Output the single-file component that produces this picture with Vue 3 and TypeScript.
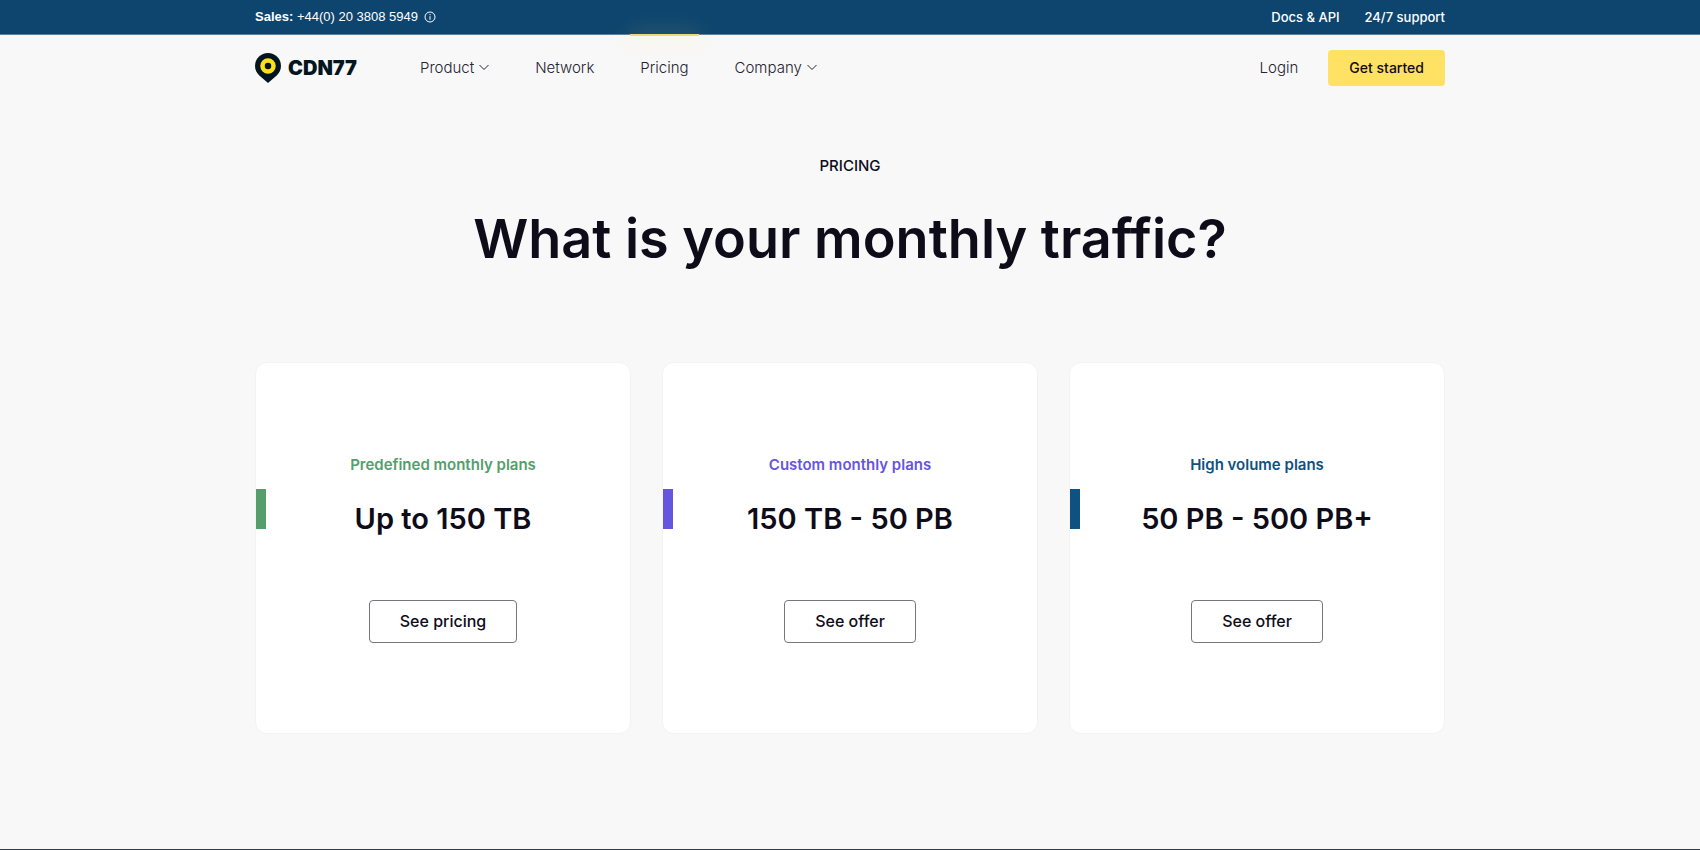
<script setup lang="ts">
interface NavItem {
  label: string
  menu: boolean
  active: boolean
}

interface Plan {
  id: string
  title: string
  range: string
  action: string
}

const navItems: NavItem[] = [
  { label: 'Product', menu: true, active: false },
  { label: 'Network', menu: false, active: false },
  { label: 'Pricing', menu: false, active: true },
  { label: 'Company', menu: true, active: false },
]

const plans: Plan[] = [
  { id: 'predefined', title: 'Predefined monthly plans', range: 'Up to 150 TB', action: 'See pricing' },
  { id: 'custom', title: 'Custom monthly plans', range: '150 TB - 50 PB', action: 'See offer' },
  { id: 'volume', title: 'High volume plans', range: '50 PB - 500 PB+', action: 'See offer' },
]
</script>

<template>
  <div class="page">
    <div class="topbar">
      <div class="container topbar-inner">
        <p class="sales">
          <span><strong>Sales:</strong> +44(0) 20 3808 5949</span>
          <svg class="info" viewBox="0 0 12 12" aria-hidden="true">
            <circle cx="6" cy="6" r="5" fill="none" stroke="currentColor" />
            <path d="M6 5.2v3.6M6 3v1.2" stroke="currentColor" />
          </svg>
        </p>
        <div class="topbar-links">
          <a href="#docs">Docs &amp; API</a>
          <a href="#support">24/7 support</a>
        </div>
      </div>
    </div>

    <header class="container header">
      <a class="logo" href="#home">
        <svg class="pin" viewBox="0 0 26 30" aria-hidden="true">
          <path d="M13 0A13 13 0 0 0 0 13c0 4.300 2 7.200 4.600 9.800L13 30l8.400-7.200C24 20.200 26 17.300 26 13A13 13 0 0 0 13 0Z" fill="#03151e" />
          <circle cx="13" cy="13" r="5.500" fill="none" stroke="#ffdf1b" stroke-width="4.500" />
        </svg>
        <span>CDN77</span>
      </a>
      <nav class="nav">
        <a
          v-for="item in navItems"
          :key="item.label"
          class="nav-link"
          :class="{ active: item.active }"
          :href="'#' + item.label.toLowerCase()"
        >
          {{ item.label }}
          <svg v-if="item.menu" class="chevron" viewBox="0 0 10 7" aria-hidden="true">
            <path d="M.5 1 5 5.500 9.500 1" fill="none" stroke="currentColor" />
          </svg>
        </a>
      </nav>
      <div class="account">
        <a class="login" href="#login">Login</a>
        <a class="start" href="#signup">Get started</a>
      </div>
    </header>

    <main class="container main">
      <p class="eyebrow">PRICING</p>
      <h1>What is your monthly traffic?</h1>
      <section class="plans">
        <article v-for="plan in plans" :key="plan.id" class="plan" :class="plan.id">
          <h2>{{ plan.title }}</h2>
          <p class="range">{{ plan.range }}</p>
          <button type="button">{{ plan.action }}</button>
        </article>
      </section>
    </main>

    <footer class="footer"></footer>
  </div>
</template>

<style>
body {
  margin: 0;
  background: #f8f8f8;
}
</style>

<style scoped>
.page {
  display: flex;
  flex-direction: column;
  min-height: 100vh;
  background: #f8f8f8;
  color: #0e0c19;
  font-family: Inter, "Liberation Sans", sans-serif;
}

a {
  color: inherit;
  text-decoration: none;
}

p,
h1,
h2 {
  margin: 0;
}

.container {
  box-sizing: border-box;
  width: 100%;
  max-width: 1222px;
  margin: 0 auto;
  padding: 0 16px;
}

.topbar {
  background: #0e456f;
  border-bottom: 1px solid #5d7f9b;
  color: #fff;
  font-size: 13px;
  line-height: 34px;
}

.topbar-inner {
  display: flex;
  justify-content: space-between;
}

.sales {
  display: flex;
  align-items: center;
  gap: 6px;
  font-family: "Liberation Sans", Arial, sans-serif;
}

.sales strong {
  font-weight: 700;
}

.info {
  width: 12px;
  height: 12px;
}

.topbar-links {
  display: flex;
  gap: 25px;
  font-weight: 500;
}

.header {
  display: flex;
  align-items: center;
  height: 65px;
}

.logo {
  display: flex;
  align-items: center;
  gap: 7px;
  color: #03151e;
  font-size: 20px;
  font-weight: 900;
}

.pin {
  width: 26px;
  height: 30px;
}

.nav {
  display: flex;
  align-self: stretch;
  gap: 26px;
  margin-left: 53px;
}

.nav-link {
  position: relative;
  display: flex;
  align-items: center;
  gap: 5px;
  padding: 0 10px;
  color: #25232f;
  font-size: 15px;
  font-weight: 300;
}

.active::before {
  content: "";
  position: absolute;
  top: -1px;
  left: 0;
  right: 0;
  height: 2px;
  background: #f0d778;
  box-shadow: 0 0 20px 2px #ffe26040;
}

.chevron {
  width: 10px;
  height: 7px;
}

.account {
  display: flex;
  align-items: center;
  gap: 30px;
  margin-left: auto;
}

.login {
  color: #25232f;
  font-size: 15px;
  font-weight: 300;
}

.start {
  padding: 0 21px;
  border-radius: 4px;
  background: #ffe164;
  font-size: 14px;
  font-weight: 500;
  line-height: 36px;
}

.main {
  flex: 1;
  padding-top: 54px;
  padding-bottom: 115px;
  text-align: center;
}

.eyebrow {
  font-size: 15px;
  font-weight: 500;
  line-height: 24px;
}

h1 {
  margin-top: 25px;
  font-size: 54px;
  font-weight: 600;
  line-height: 72px;
}

.plans {
  display: grid;
  grid-template-columns: repeat(3, 1fr);
  gap: 31px;
  margin-top: 87px;
}

.plan {
  position: relative;
  padding: 90px 24px;
  border: 1px solid #f3f3f3;
  border-radius: 12px;
  background: #fff;
}

.plan::before {
  content: "";
  position: absolute;
  top: 126px;
  left: 0;
  width: 10px;
  height: 40px;
  background: var(--accent);
}

.predefined {
  --accent: #539e6b;
}

.custom {
  --accent: #6655dd;
}

.volume {
  --accent: #0f5180;
}

h2 {
  color: var(--accent);
  font-size: 15px;
  font-weight: 600;
  line-height: 24px;
}

.range {
  margin-top: 22px;
  font-size: 29px;
  font-weight: 600;
  line-height: 40px;
}

button {
  margin-top: 61px;
  padding: 0 30px;
  border: 1px solid #77767c;
  border-radius: 4px;
  background: #fff;
  color: inherit;
  font-family: inherit;
  font-size: 16px;
  font-weight: 500;
  line-height: 41px;
}

.footer {
  border-top: 1px solid #0e456f;
}
</style>
